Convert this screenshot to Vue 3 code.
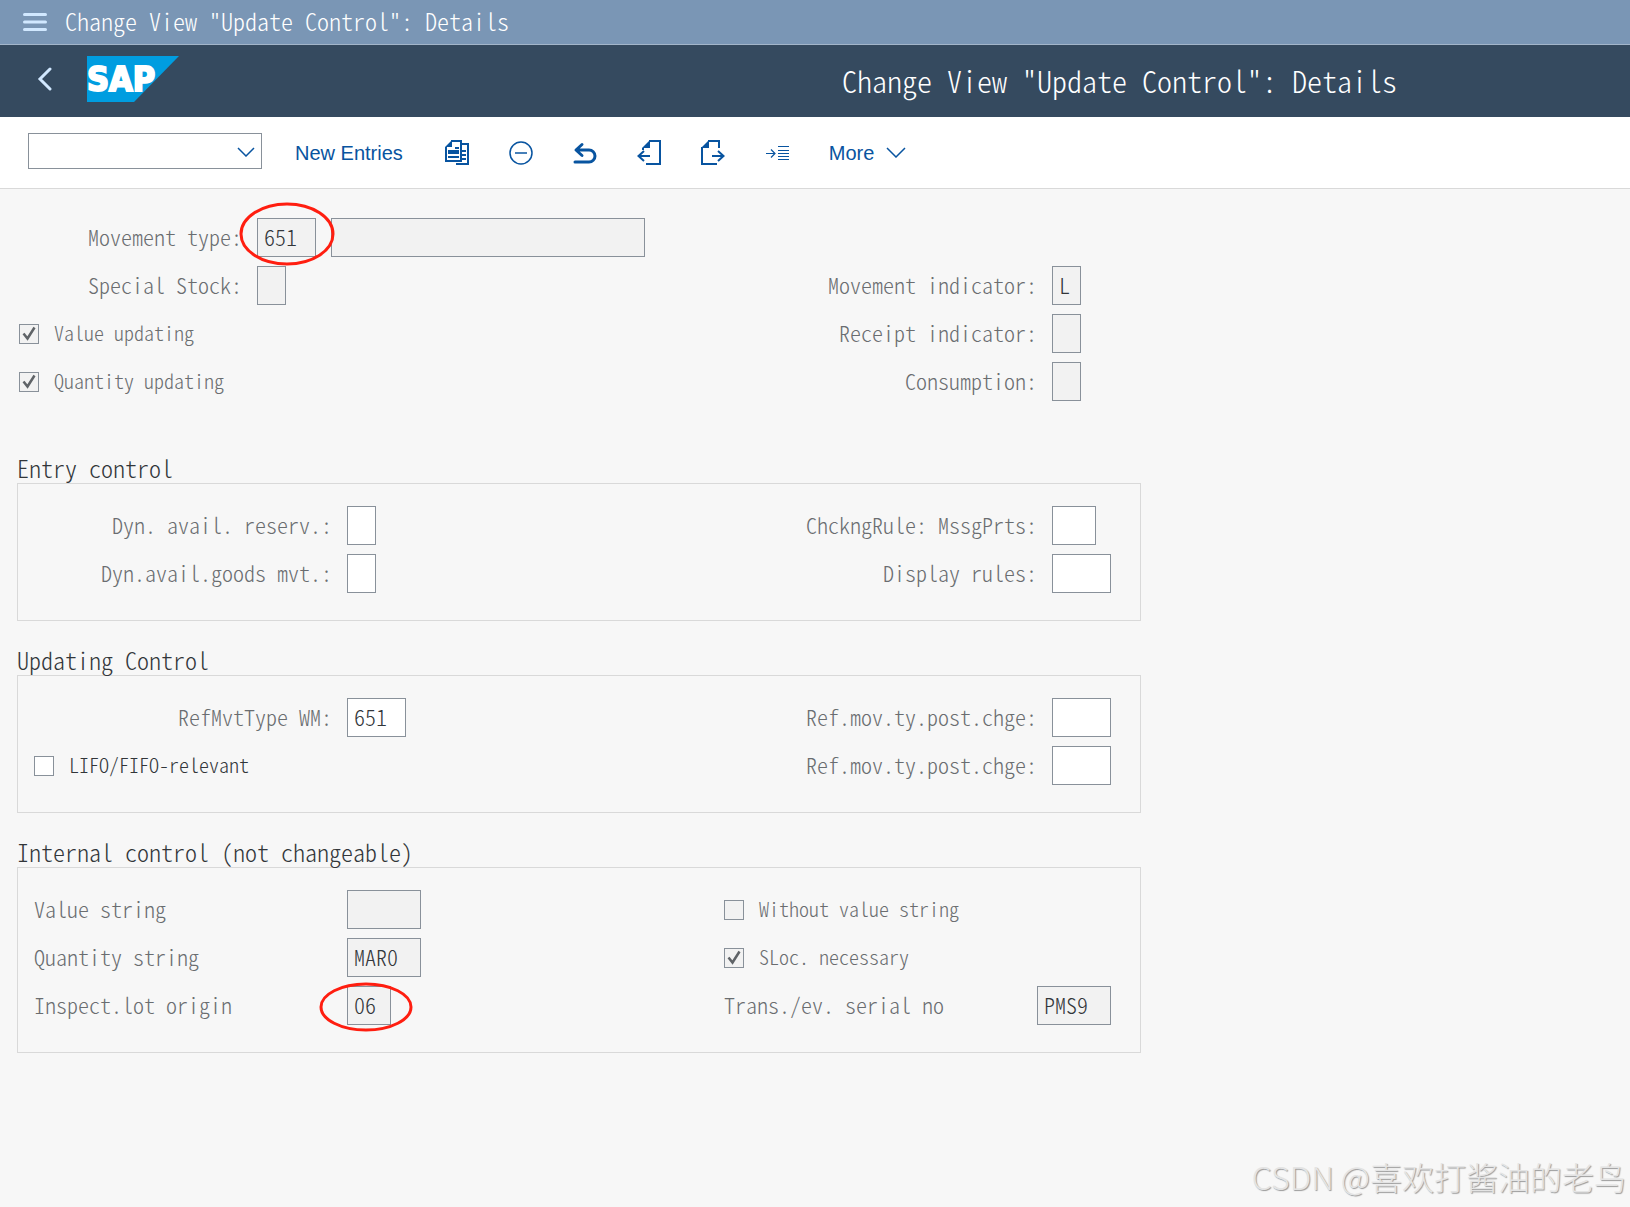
<template>
    <div class="page">
        <div class="menu-bar">
            <button class="menu-button" type="button" aria-label="Menu">
                <svg width="24" height="18" viewBox="0 0 24 18">
                    <path d="M1.5 1.5h21M1.5 9h21M1.5 16.5h21" stroke="#d1e8ff" stroke-width="3" stroke-linecap="round" />
                </svg>
            </button>
            <span>{{ title }}</span>
        </div>

        <header class="shell">
            <div class="shell-left">
                <button class="back-button" type="button" aria-label="Back">
                    <svg width="16" height="24" viewBox="0 0 16 24">
                        <path d="M13 2L3 12l10 10" fill="none" stroke="#d1e8ff" stroke-width="3" stroke-linecap="round" />
                    </svg>
                </button>
                <svg class="logo" width="92" height="46" viewBox="0 0 92 46" role="img" aria-label="SAP">
                    <path d="M0 0h92L47 46H0z" fill="#009de0" />
                    <text class="logo-text" x="0" y="35">SAP</text>
                </svg>
            </div>
            <h1>{{ title }}</h1>
        </header>

        <nav class="toolbar">
            <div class="command">
                <select v-model="command" aria-label="Command">
                    <option value=""></option>
                </select>
                <svg width="18" height="10" viewBox="0 0 18 10">
                    <path d="M1 1l8 8 8-8" fill="none" stroke="#0854a0" stroke-width="1.5" />
                </svg>
            </div>
            <button class="text-button" type="button">New Entries</button>
            <div class="icons">
                <button type="button" aria-label="Copy As">
                    <svg width="24" height="26" viewBox="0 0 24 26">
                        <path d="M17 4h6v20H11M6 1h10v20H1V7" fill="none" stroke="#0854a0" stroke-width="2" />
                        <path d="M0 7L7 0v7zM10 7h4v2h-4zM3 10h11v4H3zM3 16h11v2H3zM17 10h4v2h-4zM17 14h4v2h-4zM17 18h4v2h-4z" fill="#0854a0" />
                    </svg>
                </button>
                <button type="button" aria-label="Delete">
                    <svg width="24" height="26" viewBox="0 0 24 26">
                        <circle cx="12" cy="13" r="11" fill="none" stroke="#0854a0" stroke-width="1.5" />
                        <path d="M6 13h12" stroke="#0854a0" stroke-width="1.5" />
                    </svg>
                </button>
                <button type="button" aria-label="Undo Change">
                    <svg width="24" height="26" viewBox="0 0 24 26">
                        <path d="M9 4.500L3 10l6 5.500M3.500 10H16a6 6 0 0 1 0 12H2" fill="none" stroke="#0854a0" stroke-width="3" stroke-linecap="round" stroke-linejoin="round" />
                    </svg>
                </button>
                <button type="button" aria-label="Previous Entry">
                    <svg width="24" height="26" viewBox="0 0 24 26">
                        <path d="M12 1h11v23H9M13 16H2M7 11l-5.500 5L7 21M6 10V8" fill="none" stroke="#0854a0" stroke-width="2" />
                        <path d="M5 8l8-8v8z" fill="#0854a0" />
                    </svg>
                </button>
                <button type="button" aria-label="Next Entry">
                    <svg width="24" height="26" viewBox="0 0 24 26">
                        <path d="M7 1h11v7M16 24H1V7M11 16h11M17 11l5.500 5L17 21" fill="none" stroke="#0854a0" stroke-width="2" />
                        <path d="M0 8l8-8v8z" fill="#0854a0" />
                    </svg>
                </button>
                <button type="button" aria-label="Other Entry">
                    <svg width="24" height="26" viewBox="0 0 24 26">
                        <path d="M13 6.500h11M13 10.500h11M13 13.500h11M13 16.500h11M13 19.500h11M1 13.500h9M6 9.500l4 4-4 4" fill="none" stroke="#0854a0" stroke-width="1.200" />
                    </svg>
                </button>
            </div>
            <button class="text-button more" type="button">
                More
                <svg width="20" height="11" viewBox="0 0 20 11">
                    <path d="M1 1l9 9 9-9" fill="none" stroke="#0854a0" stroke-width="1.500" />
                </svg>
            </button>
        </nav>

        <main>
            <section v-for="section in sections" :key="section.id" :class="section.title ? 'group' : 'head'">
                <h2 v-if="section.title">{{ section.title }}</h2>
                <div class="rows">
                    <div v-for="(row, r) in section.rows" :key="r" class="row">
                        <div v-for="(cell, c) in row" :key="c" class="cell">
                            <label v-if="cell && cell.check" class="check" :class="{ active: cell.active }">
                                <input type="checkbox" v-model="cell.checked" :disabled="!cell.active" />
                                <svg width="20" height="20" viewBox="0 0 20 20">
                                    <path v-if="cell.checked" d="M4.500 9.500l4 5 7-11" fill="none" stroke="#5f6367" stroke-width="2.500" />
                                </svg>
                                <span>{{ cell.label }}</span>
                            </label>
                            <template v-else-if="cell">
                                <label class="caption" :class="cell.align" :for="cell.id">{{ cell.label }}</label>
                                <div class="field">
                                    <input :id="cell.id" type="text" :class="'w' + cell.size" v-model="cell.value" :readonly="!cell.edit" />
                                    <svg v-if="cell.mark === 'large'" class="mark-large" width="96" height="64" viewBox="0 0 96 64">
                                        <ellipse cx="48" cy="32" rx="46" ry="30" fill="none" stroke="#ff1e10" stroke-width="3" />
                                    </svg>
                                    <svg v-if="cell.mark === 'small'" class="mark-small" width="94" height="50" viewBox="0 0 94 50">
                                        <ellipse cx="47" cy="25" rx="45" ry="23" fill="none" stroke="#ff1e10" stroke-width="3" />
                                    </svg>
                                </div>
                                <div v-if="cell.text !== undefined" class="field">
                                    <input class="wide" type="text" v-model="cell.text" readonly aria-label="Movement type text" />
                                </div>
                            </template>
                        </div>
                    </div>
                </div>
            </section>
        </main>

        <div class="watermark">CSDN @喜欢打酱油的老鸟</div>
    </div>
</template>

<script setup>
import { ref } from 'vue';

const title = 'Change View "Update Control": Details';
const command = ref('');

// size = number of characters the field holds
const sections = ref([
    {
        id: 'head',
        rows: [
            [{ id: 'bwart', label: 'Movement type:', size: 3, value: '651', text: '', mark: 'large' }, null],
            [
                { id: 'sobkz', label: 'Special Stock:', size: 1, value: '' },
                { id: 'kzbew', label: 'Movement indicator:', size: 1, value: 'L' }
            ],
            [
                { check: true, label: 'Value updating', checked: true },
                { id: 'kzzug', label: 'Receipt indicator:', size: 1, value: '' }
            ],
            [
                { check: true, label: 'Quantity updating', checked: true },
                { id: 'kzvbr', label: 'Consumption:', size: 1, value: '' }
            ]
        ]
    },
    {
        id: 'entry',
        title: 'Entry control',
        rows: [
            [
                { id: 'xnvr', label: 'Dyn. avail. reserv.:', size: 1, value: '', edit: true },
                { id: 'prreg', label: 'ChckngRule: MssgPrts:', size: 2, value: '', edit: true }
            ],
            [
                { id: 'xnvm', label: 'Dyn.avail.goods mvt.:', size: 1, value: '', edit: true },
                { id: 'regel', label: 'Display rules:', size: 3, value: '', edit: true }
            ]
        ]
    },
    {
        id: 'updating',
        title: 'Updating Control',
        rows: [
            [
                { id: 'bwlvs', label: 'RefMvtType WM:', size: 3, value: '651', edit: true },
                { id: 'rbwa1', label: 'Ref.mov.ty.post.chge:', size: 3, value: '', edit: true }
            ],
            [
                { check: true, label: 'LIFO/FIFO-relevant', checked: false, active: true },
                { id: 'rbwa2', label: 'Ref.mov.ty.post.chge:', size: 3, value: '', edit: true }
            ]
        ]
    },
    {
        id: 'internal',
        title: 'Internal control (not changeable)',
        rows: [
            [
                { id: 'wertstr', label: 'Value string', size: 4, value: '', align: 'start' },
                { check: true, label: 'Without value string', checked: false }
            ],
            [
                { id: 'mengstr', label: 'Quantity string', size: 4, value: 'MAR0', align: 'start' },
                { check: true, label: 'SLoc. necessary', checked: true }
            ],
            [
                { id: 'herk', label: 'Inspect.lot origin', size: 2, value: '06', align: 'start', mark: 'small' },
                { id: 'serial', label: 'Trans./ev. serial no', size: 4, value: 'PMS9', align: 'start' }
            ]
        ]
    }
]);
</script>

<style>
body {
    margin: 0;
    background: #f7f7f7;
}
</style>

<style scoped>
.page {
    position: relative;
    min-height: 100vh;
    font-family: "Noto Sans CJK SC", monospace;
    font-feature-settings: "hwid";
    font-weight: 300;
    color: #32363a;
}

button {
    display: flex;
    align-items: center;
    padding: 0;
    border: 0;
    background: none;
    cursor: pointer;
}

svg {
    display: block;
}

.menu-bar {
    display: flex;
    align-items: center;
    gap: 18px;
    height: 44px;
    padding-left: 23px;
    border-bottom: 1px solid #a3b5ca;
    background: #7a96b5;
    color: #fff;
    font-size: 24px;
    line-height: 32px;
}

.menu-bar span {
    padding-bottom: 2px;
}

.shell {
    display: flex;
    align-items: center;
    height: 72px;
    background: #354a5f;
    color: #fff;
}

.shell-left {
    display: flex;
    align-items: center;
    gap: 34px;
    flex: 0 0 572px;
    padding: 0 0 4px 37px;
}

.logo-text {
    fill: #fff;
    stroke: #fff;
    stroke-width: 2px;
    font-family: "DejaVu Sans Condensed", "DejaVu Sans", sans-serif;
    font-feature-settings: normal;
    font-size: 34px;
    font-weight: bold;
}

h1 {
    flex: 1;
    margin: 0;
    padding-bottom: 2px;
    font-size: 30px;
    font-weight: 300;
    line-height: 40px;
    text-align: center;
    white-space: nowrap;
}

.toolbar {
    display: flex;
    align-items: center;
    height: 71px;
    padding-left: 28px;
    border-bottom: 1px solid #d9d9d9;
    background: #fff;
}

.command {
    position: relative;
    margin-bottom: 4px;
}

.command select {
    display: block;
    box-sizing: border-box;
    width: 234px;
    height: 36px;
    padding: 0 32px 0 8px;
    border: 1px solid #89919a;
    border-radius: 0;
    background: #fff;
    appearance: none;
}

.command svg {
    position: absolute;
    top: 14px;
    right: 7px;
    pointer-events: none;
}

.text-button {
    margin-left: 33px;
    color: #0854a0;
    font-family: "Liberation Sans", Arial, sans-serif;
    font-feature-settings: normal;
    font-size: 20px;
    line-height: 24px;
}

.icons {
    display: flex;
    gap: 40px;
    margin-left: 42px;
}

.more {
    gap: 12px;
    margin-left: 40px;
}

main {
    max-width: 1124px;
    padding: 29px 17px 96px;
}

.head {
    padding: 0 30px 28px 2px;
}

.group {
    margin-top: 28px;
}

h2 {
    margin: 0;
    padding-bottom: 4px;
    font-size: 24px;
    font-weight: 300;
    line-height: 22px;
}

.rows {
    display: flex;
    flex-direction: column;
    gap: 9px;
}

.group .rows {
    padding: 22px 29px 27px 16px;
    border: 1px solid #d9d9d9;
}

.row {
    display: flex;
}

.cell {
    display: flex;
    align-items: center;
    flex: 0 0 387px;
    min-height: 39px;
    gap: 15px;
}

.cell:first-child {
    flex: 1;
}

.caption {
    width: 313px;
    padding-bottom: 4px;
    color: #6a6d70;
    font-size: 22px;
    line-height: 28px;
    text-align: right;
    white-space: nowrap;
}

.caption.start,
.cell:first-child .caption {
    width: 298px;
}

.head .cell:first-child .caption {
    width: 223px;
}

.caption.start {
    text-align: left;
}

.field {
    position: relative;
}

.field input {
    display: block;
    box-sizing: border-box;
    height: 39px;
    padding: 0 6px 4px;
    border: 1px solid #89919a;
    border-radius: 0;
    outline: 0;
    background: #fff;
    color: #32363a;
    font: inherit;
    font-feature-settings: inherit;
    font-size: 22px;
}

.field input:read-only {
    background: #f2f2f2;
}

.w1 {
    width: 29px;
}

.w2 {
    width: 44px;
}

.w3 {
    width: 59px;
}

.w4 {
    width: 74px;
}

.wide {
    width: 314px;
}

.mark-large {
    position: absolute;
    top: -16px;
    left: -18px;
    z-index: 1;
    pointer-events: none;
}

.mark-small {
    position: absolute;
    top: -4px;
    left: -28px;
    z-index: 1;
    pointer-events: none;
}

.check {
    position: relative;
    display: flex;
    align-items: center;
    gap: 15px;
    color: #6a6d70;
    font-size: 20px;
    line-height: 28px;
}

.check span {
    padding-bottom: 2px;
}

.check.active {
    color: #32363a;
}

.check input {
    box-sizing: border-box;
    width: 20px;
    height: 20px;
    margin: 0;
    border: 1px solid #89919a;
    background: #f2f2f2;
    appearance: none;
}

.check.active input {
    background: #fff;
}

.check svg {
    position: absolute;
    left: 0;
    pointer-events: none;
}

.watermark {
    position: absolute;
    right: 4px;
    bottom: 7px;
    color: #e4e4e4;
    font-feature-settings: normal;
    font-size: 32px;
    line-height: 48px;
    text-shadow: 1px 1px 1px #999;
}
</style>
